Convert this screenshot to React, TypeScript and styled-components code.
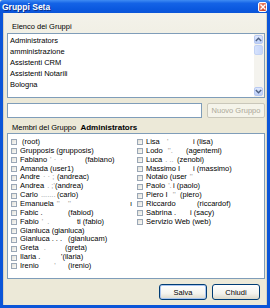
import styled, { createGlobalStyle } from "styled-components";

const GlobalStyle = createGlobalStyle`
    html, body {
        margin: 0;
        padding: 0;
        background: #ece9d8;
    }
    * {
        box-sizing: border-box;
    }
`;

type Member = {
    name: string;
    mark?: string;
    at?: number;
    login?: string;
};

const groups = [
    "Administrators",
    "amministrazione",
    "Assistenti CRM",
    "Assistenti Notarili",
    "Bologna",
];

const members: Member[] = [
    { name: "\u00a0(root)" },
    { name: "Grupposis (grupposis)" },
    { name: "Fabiano", mark: "' \u00b7  \u00b7", at: 65, login: "(fabiano)" },
    { name: "Amanda (user1)" },
    { name: "Andre", mark: "\u00b7 \u00b7 ;", at: 37, login: "(andreac)" },
    { name: "Andrea", mark: ". ;'", at: 35, login: "(andrea)" },
    { name: "Carlo", mark: ".......", at: 37, login: "(carlo)" },
    { name: "Emanuela", mark: "''    ''", at: 110, login: "\u0131" },
    { name: "Fabic .", at: 48, login: "(fabiod)" },
    { name: "Fabio", mark: "'  .", at: 57, login: "ti (fabio)" },
    { name: "Gianluca (gianluca)" },
    { name: "Gianluca . . .", at: 48, login: "(gianlucam)" },
    { name: "Greta", mark: " .", at: 45, login: "(greta)" },
    { name: "Ilaria .", at: 41, login: "'(ilaria)" },
    { name: "Irenio", mark: "      '", at: 48, login: "(irenio)" },
    { name: "Lisa", mark: "  '", at: 47, login: "i (lisa)" },
    { name: "Lodo", mark: " ''.", at: 40, login: "(agentemi)" },
    { name: "Luca", mark: ". ..", at: 31, login: "(zenobi)" },
    { name: "Massimo I", at: 47, login: "i (massimo)" },
    { name: "Notaio (user", mark: "''" },
    { name: "Paolo", mark: "'.", at: 27, login: "i (paolo)" },
    { name: "Piero I", mark: " ''", at: 34, login: "(piero)" },
    { name: "Riccardo", at: 51, login: "(riccardof)" },
    { name: "Sabrina .", at: 44, login: "i (sacy)" },
    { name: "Servizio Web (web)" },
];

export default function App() {
    return (
        <>
            <GlobalStyle />
            <Window>
                <TitleBar>
                    <Title>Gruppi Seta</Title>
                    <CloseButton>
                        <svg width="6" height="6" viewBox="0 0 6 6">
                            <path d="M0.5 0.5 L5.5 5.5 M5.5 0.5 L0.5 5.5" stroke="#fff" strokeWidth="1.4" />
                        </svg>
                    </CloseButton>
                </TitleBar>
                <Frame>
                    <Page>
                        <Caption $h={20} $top={6}>Elenco dei Gruppi</Caption>
                        <ListBox>
                            <ListItems>
                                {groups.map((g) => (
                                    <ListItem key={g}>{g}</ListItem>
                                ))}
                            </ListItems>
                            <ScrollBar>
                                <ScrollArrow>
                                    <svg width="7" height="5" viewBox="0 0 7 5">
                                        <path d="M0.8 4 L3.5 1.2 L6.2 4" fill="none" stroke="#4d6185" strokeWidth="1.4" />
                                    </svg>
                                </ScrollArrow>
                                <Thumb />
                                <Track />
                                <ScrollArrow>
                                    <svg width="7" height="5" viewBox="0 0 7 5">
                                        <path d="M0.8 1 L3.5 3.8 L6.2 1" fill="none" stroke="#4d6185" strokeWidth="1.4" />
                                    </svg>
                                </ScrollArrow>
                            </ScrollBar>
                        </ListBox>
                        <InputRow>
                            <TextInput />
                            <SmallButton disabled>Nuovo Gruppo</SmallButton>
                        </InputRow>
                        <Caption $h={15} $top={3}>
                            Membri del Gruppo&nbsp; <strong>Administrators</strong>
                        </Caption>
                        <MembersPanel>
                            {members.map((m, i) => (
                                <MemberCell key={i}>
                                    <Check />
                                    {m.at !== undefined ? (
                                        <>
                                            <NamePart $at={m.at}>
                                                {m.name}
                                                {m.mark && <Mark>{m.mark}</Mark>}
                                            </NamePart>
                                            <span>{m.login}</span>
                                        </>
                                    ) : (
                                        <span>
                                            {m.name}
                                            {m.mark && <Mark>{m.mark}</Mark>}
                                        </span>
                                    )}
                                </MemberCell>
                            ))}
                        </MembersPanel>
                        <Footer>
                            <DialogButton $default>Salva</DialogButton>
                            <DialogButton>Chiudi</DialogButton>
                        </Footer>
                    </Page>
                </Frame>
            </Window>
        </>
    );
}

const Window = styled.div`
    width: 270px;
    height: 308px;
    display: flex;
    flex-direction: column;
    font-family: "Liberation Sans", Arial, sans-serif;
    font-size: 7.5px;
    color: #000;
`;

const TitleBar = styled.div`
    height: 13px;
    flex: none;
    display: flex;
    align-items: center;
    justify-content: space-between;
    padding: 0 3px 0 2px;
    background: linear-gradient(#3f8cf3 0%, #1463e6 25%, #0a58df 70%, #0b55d8 100%);
    border-radius: 3px 3px 0 0;
`;

const Title = styled.span`
    color: #fff;
    font-weight: bold;
    font-size: 8.5px;
    text-shadow: 1px 1px 0 #0a2f8a;
`;

const CloseButton = styled.div`
    width: 9px;
    height: 10px;
    border: 1px solid #fff;
    border-radius: 2px;
    background: linear-gradient(135deg, #f09c84 0%, #d9583b 60%, #c44022 100%);
    display: flex;
    align-items: center;
    justify-content: center;
`;

const Frame = styled.div`
    flex: 1;
    min-height: 0;
    display: flex;
    background: #0b55d8;
    padding: 0 3px 3px 3px;
`;

const Page = styled.div`
    flex: 1;
    display: flex;
    flex-direction: column;
    padding: 0 1px 0 3px;
    background: linear-gradient(#f3f2ea 0%, #ece9d8 25%, #ece9d8 100%);
    border-left: 1px solid #d6d3c4;
    border-right: 1px solid #d6d3c4;
`;

const Caption = styled.div<{ $h: number; $top: number }>`
    flex: none;
    height: ${(p) => p.$h}px;
    display: flex;
    align-items: center;
    padding: ${(p) => p.$top}px 0 0 5px;
    white-space: pre;

    strong {
        font-size: 8px;
    }
`;

const ListBox = styled.div`
    flex: none;
    height: 65px;
    display: flex;
    background: #fff;
    border: 1px solid #7f9db9;
`;

const ListItems = styled.div`
    flex: 1;
    padding: 1px 0 0 2px;
`;

const ListItem = styled.div`
    height: 11px;
    line-height: 11px;
`;

const ScrollBar = styled.div`
    width: 10px;
    display: flex;
    flex-direction: column;
    padding: 1px 1px 1px 0;
    background: #f4f3ee;
`;

const ScrollArrow = styled.div`
    height: 9px;
    border: 1px solid #b7c9f2;
    border-radius: 2px;
    background: linear-gradient(#dfe8fd, #bccff7);
    display: flex;
    align-items: center;
    justify-content: center;
`;

const Thumb = styled.div`
    height: 10px;
    margin-top: 1px;
    border: 1px solid #c2d2f4;
    border-radius: 2px;
    background: linear-gradient(90deg, #d6e2fc, #c6d6fa);
`;

const Track = styled.div`
    flex: 1;
`;

const InputRow = styled.div`
    flex: none;
    display: flex;
    gap: 5px;
    margin-top: 5px;
    height: 15px;
`;

const TextInput = styled.div`
    width: 195px;
    background: #fff;
    border: 1px solid #7f9db9;
`;

const SmallButton = styled.button`
    flex: 1;
    padding: 0;
    font-family: inherit;
    font-size: 7.5px;
    color: #aca899;
    background: #f5f4ea;
    border: 1px solid #c9c7ba;
    border-radius: 2px;
`;

const MembersPanel = styled.div`
    flex: none;
    height: 146px;
    background: #fff;
    border: 1px solid #7f9db9;
    padding: 4px 0 0 3px;
    display: grid;
    grid-auto-flow: column;
    grid-template-rows: repeat(15, 8.86px);
    grid-template-columns: 124px 1fr;
    column-gap: 2px;
    align-content: start;
`;

const MemberCell = styled.div`
    display: flex;
    align-items: center;
    white-space: pre;
    overflow: hidden;
    line-height: 8.86px;
`;

const Check = styled.span`
    flex: none;
    width: 6px;
    height: 6px;
    margin-right: 3px;
    border: 1px solid #9aa7b6;
    background: linear-gradient(135deg, #e0dfd8, #fbfbf8);
`;

const NamePart = styled.span<{ $at: number }>`
    flex: none;
    display: inline-block;
    min-width: ${(p) => p.$at}px;
`;

const Mark = styled.span`
    color: #9a9a9a;
    margin-left: 3px;
`;

const Footer = styled.div`
    flex: none;
    display: flex;
    justify-content: flex-end;
    gap: 5px;
    padding-right: 5px;
    margin-top: 5px;
`;

const DialogButton = styled.button<{ $default?: boolean }>`
    width: 48px;
    height: 16px;
    padding: 0;
    font-family: inherit;
    font-size: 7.5px;
    color: #000;
    border: 1px solid #003c74;
    border-radius: 3px;
    background: linear-gradient(#ffffff 0%, #f4f3ee 60%, #dcd9ca 100%);
    box-shadow: ${(p) => (p.$default ? "inset 0 0 0 1px #a8c4f0" : "none")};
`;
